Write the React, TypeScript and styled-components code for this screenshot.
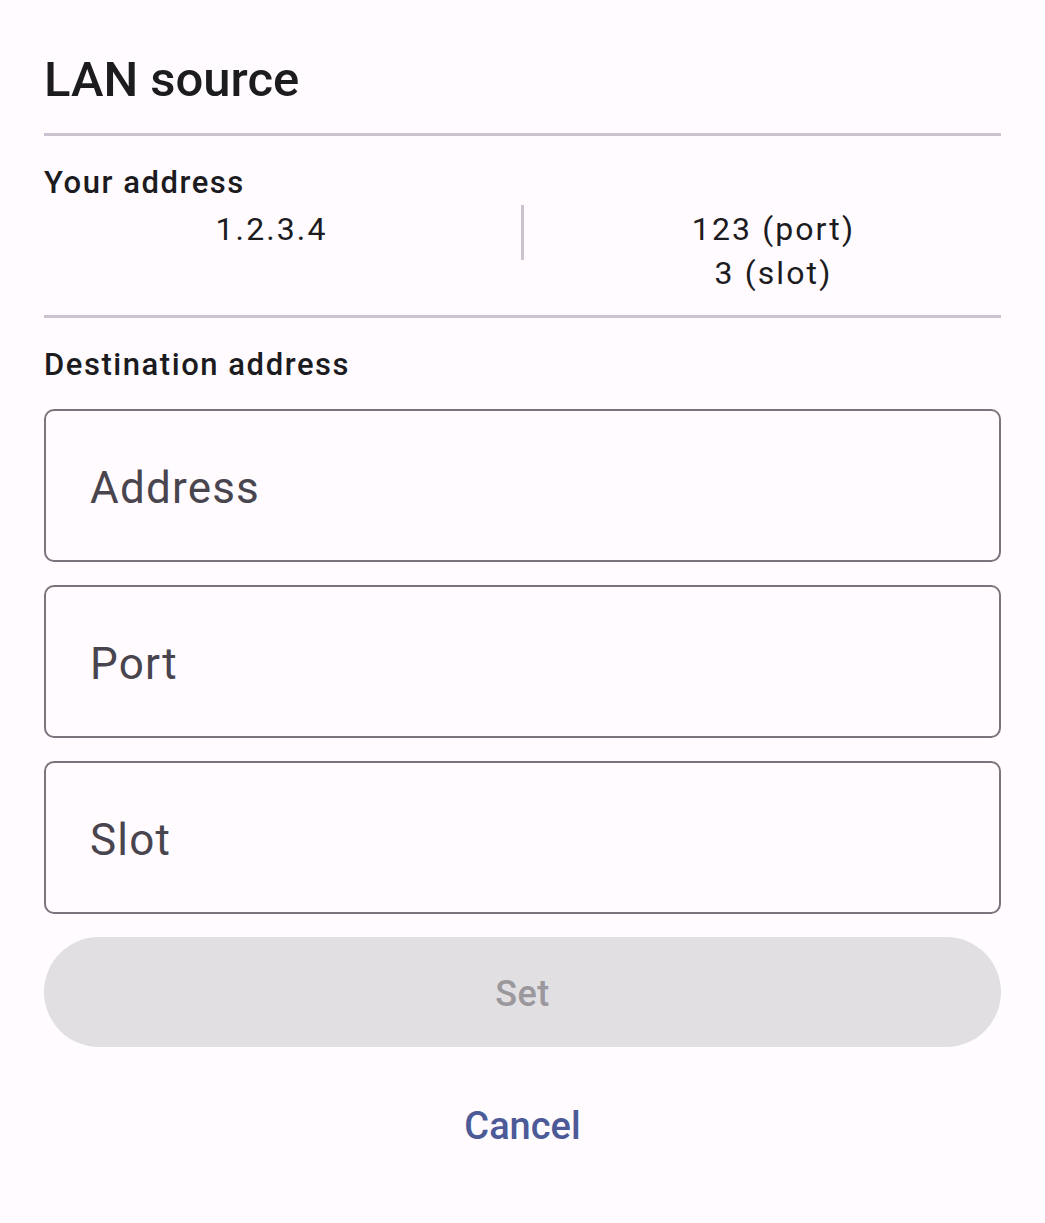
import React from "react";
import styled, { createGlobalStyle } from "styled-components";

const Global = createGlobalStyle`
  html, body {
    margin: 0;
    padding: 0;
    background: #fffbfe;
  }
  body {
    font-family: Roboto, "Noto Sans", "Liberation Sans", sans-serif;
    color: #1c1b1f;
  }
`;

const Dialog = styled.div`
  width: 1045px;
  min-height: 1223px;
  box-sizing: border-box;
  padding: 44px 44px 0 44px;
  display: flex;
  flex-direction: column;
  background: #fffbfe;
`;

const Title = styled.h1`
  margin: 0;
  font-size: 49px;
  font-weight: 500;
  line-height: 72px;
  color: #1c1b1f;
`;

const Divider = styled.div<{ $top: number; $bottom: number }>`
  height: 3px;
  background: #cac4d0;
  margin-top: ${(p) => p.$top}px;
  margin-bottom: ${(p) => p.$bottom}px;
`;

const SectionLabel = styled.div`
  font-size: 31px;
  font-weight: 500;
  line-height: 40px;
  letter-spacing: 1.55px;
  color: #1c1b1f;
`;

const ValuesRow = styled.div`
  display: grid;
  grid-template-columns: 1fr 3px 1fr;
  column-gap: 22px;
  align-items: start;
`;

const ValueCol = styled.div`
  display: flex;
  flex-direction: column;
  align-items: center;
  padding-top: 4px;
  font-size: 32px;
  line-height: 44px;
  letter-spacing: 2.1px;
  color: #1c1b1f;
`;

const VDivider = styled.div`
  width: 3px;
  height: 55px;
  background: #cac4d0;
  margin-top: 2px;
`;

const Fields = styled.div`
  display: flex;
  flex-direction: column;
  gap: 23px;
  margin-top: 24px;
`;

const Field = styled.div`
  height: 153px;
  box-sizing: border-box;
  border: 2.6px solid #79747e;
  border-radius: 10px;
  display: flex;
  align-items: center;
  padding-left: 44px;
  padding-top: 5px;
  font-size: 44px;
  letter-spacing: 1.2px;
  color: #49454f;
`;

const SetButton = styled.div`
  margin-top: 23px;
  height: 110px;
  border-radius: 55px;
  background: #e1dfe2;
  display: flex;
  align-items: center;
  justify-content: center;
  padding-top: 3px;
  box-sizing: border-box;
  font-size: 36px;
  font-weight: 500;
  letter-spacing: 0.5px;
  color: #9a989c;
`;

const CancelButton = styled.div`
  margin-top: 50px;
  display: flex;
  justify-content: center;
  font-size: 38px;
  font-weight: 500;
  color: #4c5a98;
  line-height: 58px;
`;

export default function App() {
  return (
    <>
      <Global />
      <Dialog>
        <Title>LAN source</Title>
        <Divider $top={17} $bottom={27} />
        <SectionLabel>Your address</SectionLabel>
        <ValuesRow>
          <ValueCol>
            <span>1.2.3.4</span>
          </ValueCol>
          <VDivider />
          <ValueCol>
            <span>123 (port)</span>
            <span>3 (slot)</span>
          </ValueCol>
        </ValuesRow>
        <Divider $top={20} $bottom={27} />
        <SectionLabel>Destination address</SectionLabel>
        <Fields>
          <Field>Address</Field>
          <Field>Port</Field>
          <Field>Slot</Field>
        </Fields>
        <SetButton>Set</SetButton>
        <CancelButton>Cancel</CancelButton>
      </Dialog>
    </>
  );
}
